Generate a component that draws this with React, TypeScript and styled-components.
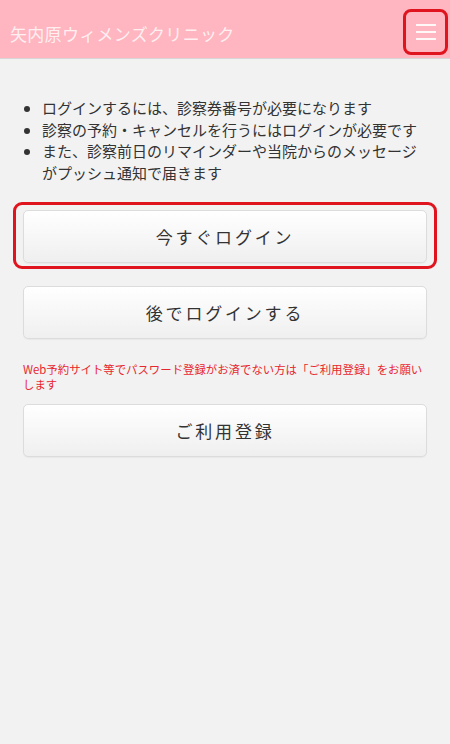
import React from "react";
import styled, { createGlobalStyle } from "styled-components";

const GlobalStyle = createGlobalStyle`
  html, body {
    margin: 0;
    padding: 0;
    background: #f2f2f2;
    font-family: "Noto Sans CJK JP", "Noto Sans", sans-serif;
  }
`;

export default function App() {
  return (
    <>
      <GlobalStyle />
      <Page>
        <Header>
          <Title>矢内原ウィメンズクリニック</Title>
          <MenuButton aria-label="menu">
            <MenuLine />
            <MenuLine />
            <MenuLine />
          </MenuButton>
        </Header>

        <Content>
          <InfoList>
            <li>ログインするには、診察券番号が必要になります</li>
            <li>診察の予約・キャンセルを行うにはログインが必要です</li>
            <li>また、診察前日のリマインダーや当院からのメッセージがプッシュ通知で届きます</li>
          </InfoList>

          <Highlight>
            <ActionButton>今すぐログイン</ActionButton>
          </Highlight>

          <ActionButton $top={17}>後でログインする</ActionButton>

          <Notice>
            Web予約サイト等でパスワード登録がお済でない方は「ご利用登録」をお願いします
          </Notice>

          <ActionButton $top={12}>ご利用登録</ActionButton>
        </Content>
      </Page>
    </>
  );
}

const Page = styled.div`
  min-height: 744px;
  background: #f2f2f2;
`;

const Header = styled.header`
  height: 58px;
  background: #ffb6c1;
  border-bottom: 1px solid #d9d4d5;
  display: flex;
  align-items: center;
  justify-content: space-between;
  padding: 0 2px 0 10px;
  box-sizing: content-box;
`;

const Title = styled.h1`
  margin: 0;
  padding-top: 9px;
  font-size: 17px;
  font-weight: 400;
  color: rgba(255, 255, 255, 0.8);
  letter-spacing: 0.3px;
`;

const MenuButton = styled.button`
  width: 45px;
  height: 46px;
  margin-top: 6px;
  border: 3px solid #e0141e;
  border-radius: 8px;
  background: transparent;
  display: flex;
  flex-direction: column;
  align-items: center;
  justify-content: center;
  gap: 4.5px;
  padding: 0;
  box-sizing: border-box;
`;

const MenuLine = styled.span`
  display: block;
  width: 20px;
  height: 2.5px;
  background: rgba(255, 255, 255, 0.9);
`;

const Content = styled.main`
  padding: 38px 23px 0;
`;

const InfoList = styled.ul`
  margin: 0;
  padding: 0 0 0 19px;
  font-size: 15px;
  line-height: 21.5px;
  color: #333;
`;

const Highlight = styled.div`
  margin: 19px -10px 0;
  border: 3px solid #e0141e;
  border-radius: 9px;
  padding: 5px 7px 3px;
`;

const ActionButton = styled.button<{ $top?: number }>`
  display: block;
  width: 100%;
  height: 53px;
  margin-top: ${(p) => p.$top ?? 0}px;
  border: 1px solid #dcdcdc;
  border-radius: 5px;
  background: linear-gradient(#ffffff, #efefef);
  box-shadow: 0 1px 1px rgba(0, 0, 0, 0.04);
  font-family: "Noto Sans CJK JP", "Noto Sans", sans-serif;
  font-size: 17px;
  letter-spacing: 2.8px;
  color: #333;
  padding: 0;
`;

const Notice = styled.p`
  margin: 23px 0 0;
  font-size: 11.4px;
  line-height: 15px;
  color: #e8262e;
`;
